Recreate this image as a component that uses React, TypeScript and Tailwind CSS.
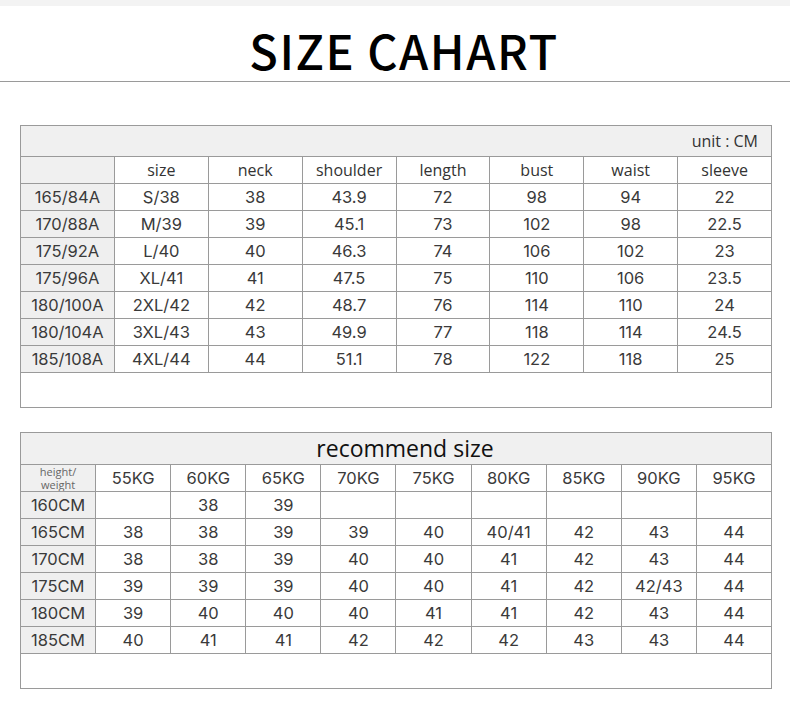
import React from "react";

const sizeRows = [
  ["165/84A", "S/38", "38", "43.9", "72", "98", "94", "22"],
  ["170/88A", "M/39", "39", "45.1", "73", "102", "98", "22.5"],
  ["175/92A", "L/40", "40", "46.3", "74", "106", "102", "23"],
  ["175/96A", "XL/41", "41", "47.5", "75", "110", "106", "23.5"],
  ["180/100A", "2XL/42", "42", "48.7", "76", "114", "110", "24"],
  ["180/104A", "3XL/43", "43", "49.9", "77", "118", "114", "24.5"],
  ["185/108A", "4XL/44", "44", "51.1", "78", "122", "118", "25"],
];

const headers = ["size", "neck", "shoulder", "length", "bust", "waist", "sleeve"];

const weights = ["55KG", "60KG", "65KG", "70KG", "75KG", "80KG", "85KG", "90KG", "95KG"];

const recRows = [
  ["160CM", "", "38", "39", "", "", "", "", "", ""],
  ["165CM", "38", "38", "39", "39", "40", "40/41", "42", "43", "44"],
  ["170CM", "38", "38", "39", "40", "40", "41", "42", "43", "44"],
  ["175CM", "39", "39", "39", "40", "40", "41", "42", "42/43", "44"],
  ["180CM", "39", "40", "40", "40", "41", "41", "42", "43", "44"],
  ["185CM", "40", "41", "41", "42", "42", "42", "43", "43", "44"],
];

const num = "font-['Inter',sans-serif] text-[16.5px] text-[#3a3a3a]";
const open = "font-['Open_Sans',sans-serif] text-[16px] text-[#333]";

export default function App() {
  return (
    <div className="w-[790px] h-[711px] bg-white overflow-hidden flex flex-col">
      <div className="h-[6px] bg-[#f3f3f3]" />
      <div className="h-[76px] flex items-end justify-center border-b border-[#9a9a9a] pl-[18px]">
        <span className="font-['Noto_Sans_CJK_SC',sans-serif] font-medium text-[47px] leading-none tracking-[1.5px] text-black mb-[8px]">
          SIZE CAHART
        </span>
      </div>

      {/* Table 1 */}
      <div className="ml-[20px] mt-[43px] w-[752px] border border-[#9a9a9a] bg-[#9a9a9a] grid grid-cols-8 gap-px">
        <div className="col-span-8 h-[30px] bg-[#f0f0f0] flex items-end justify-end pr-[13px] pb-[3px]">
          <span className={open}>unit : CM</span>
        </div>
        <div className="h-[26px] bg-[#f0f0f0]" />
        {headers.map((h) => (
          <div key={h} className="h-[26px] bg-white flex items-center justify-center">
            <span className={open}>{h}</span>
          </div>
        ))}
        {sizeRows.map((r, i) =>
          r.map((c, j) => (
            <div
              key={`${i}-${j}`}
              className={`h-[26px] flex items-center justify-center ${j === 0 ? "bg-[#efefef]" : "bg-white"}`}
            >
              <span className={num}>{c}</span>
            </div>
          ))
        )}
        <div className="col-span-8 h-[34px] bg-white" />
      </div>

      {/* Table 2 */}
      <div className="ml-[20px] mt-[24px] w-[752px] border border-[#9a9a9a] bg-[#9a9a9a] grid grid-cols-10 gap-px">
        <div className="col-span-10 h-[31px] bg-[#f0f0f0] flex items-end justify-center pl-[18px]">
          <span className="font-['Open_Sans',sans-serif] text-[23px] leading-none text-[#111] pb-[4px]">recommend size</span>
        </div>
        <div className="h-[26px] bg-[#f0f0f0] flex items-center justify-center overflow-hidden">
          <span className="font-['Open_Sans',sans-serif] text-[11px] text-[#666] leading-[13px] text-center">
            height/
            <br />
            weight
          </span>
        </div>
        {weights.map((w) => (
          <div key={w} className="h-[26px] bg-white flex items-center justify-center">
            <span className={num}>{w}</span>
          </div>
        ))}
        {recRows.map((r, i) =>
          r.map((c, j) => (
            <div
              key={`${i}-${j}`}
              className={`h-[26px] flex items-center justify-center ${j === 0 ? "bg-[#efefef]" : "bg-white"}`}
            >
              <span className={num}>{c}</span>
            </div>
          ))
        )}
        <div className="col-span-10 h-[34px] bg-white" />
      </div>
    </div>
  );
}
